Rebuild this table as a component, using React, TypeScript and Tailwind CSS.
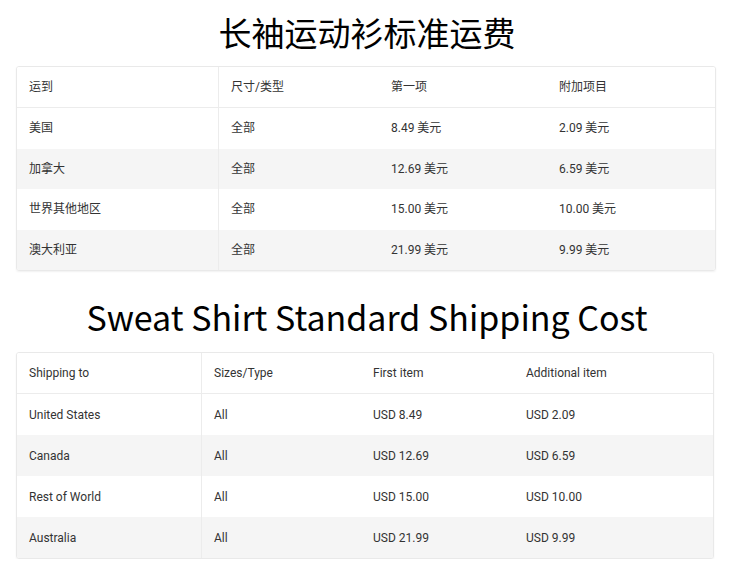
const zhRows = [
  ['美国', '全部', '8.49 美元', '2.09 美元'],
  ['加拿大', '全部', '12.69 美元', '6.59 美元'],
  ['世界其他地区', '全部', '15.00 美元', '10.00 美元'],
  ['澳大利亚', '全部', '21.99 美元', '9.99 美元'],
]

const enRows = [
  ['United States', 'All', 'USD 8.49', 'USD 2.09'],
  ['Canada', 'All', 'USD 12.69', 'USD 6.59'],
  ['Rest of World', 'All', 'USD 15.00', 'USD 10.00'],
  ['Australia', 'All', 'USD 21.99', 'USD 9.99'],
]

function ShippingTable({
  head,
  rows,
  widths,
  rowH,
}: {
  head: string[]
  rows: string[][]
  widths: string[]
  rowH: string
}) {
  return (
    <div className="rounded-[3px] border border-[#e9e9e9] shadow-[0_1px_2px_rgba(0,0,0,0.06)] overflow-hidden">
      <div className="flex h-[41px] border-b border-[#ececec] bg-white">
        {head.map((h, i) => (
          <div
            key={h}
            className={`${widths[i]} flex items-center px-3 ${i === 0 ? 'border-r border-[#ececec]' : ''}`}
          >
            {h}
          </div>
        ))}
      </div>
      {rows.map((r, ri) => (
        <div key={r[0]} className={`flex ${rowH} ${ri % 2 === 1 ? 'bg-[#f5f5f5]' : 'bg-white'}`}>
          {r.map((c, i) => (
            <div
              key={i}
              className={`${widths[i]} flex items-center px-3 ${i === 0 ? 'border-r border-[#ececec]' : ''}`}
            >
              {c}
            </div>
          ))}
        </div>
      ))}
    </div>
  )
}

export default function App() {
  return (
    <div
      className="w-[734px] bg-white text-[12px] text-[#333]"
      style={{ fontFamily: 'Roboto, "Noto Sans CJK SC", sans-serif' }}
    >
      <h1
        className="h-[66px] flex items-center justify-center text-[33px] text-black"
        style={{ fontFamily: '"Noto Sans CJK SC", sans-serif' }}
      >
        长袖运动衫标准运费
      </h1>
      <div className="ml-4 mr-[18px]">
        <ShippingTable
          head={['运到', '尺寸/类型', '第一项', '附加项目']}
          rows={zhRows}
          widths={['w-[202px]', 'w-[160px]', 'w-[168px]', 'flex-1']}
          rowH="h-[40.5px]"
        />
      </div>
      <h2
        className="h-[81px] pt-[10px] flex items-center justify-center text-[34px] text-black"
        style={{ fontFamily: '"Noto Sans CJK SC", sans-serif' }}
      >
        Sweat Shirt Standard Shipping Cost
      </h2>
      <div className="ml-4 mr-5">
        <ShippingTable
          head={['Shipping to', 'Sizes/Type', 'First item', 'Additional item']}
          rows={enRows}
          widths={['w-[185px]', 'w-[159px]', 'w-[153px]', 'flex-1']}
          rowH="h-[41px]"
        />
      </div>
    </div>
  )
}
